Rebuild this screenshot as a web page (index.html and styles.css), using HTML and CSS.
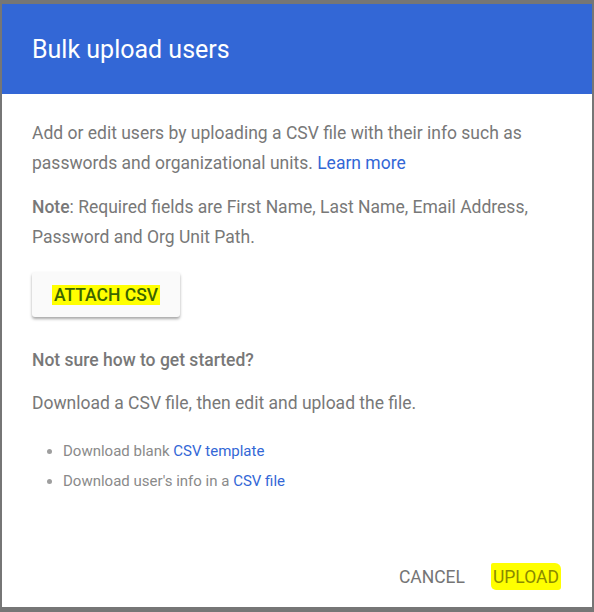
FILE: index.html
```html
<!DOCTYPE html>
<html lang="en">
<head>
  <meta charset="UTF-8">
  <title>Bulk upload users</title>
  <link rel="stylesheet" href="styles.css">
</head>
<body>

<div class="dialog">
  <header class="dialog-header">
    <h1>Bulk upload users</h1>
  </header>

  <div class="dialog-body">
    <p>Add or edit users by uploading a CSV file with their info such as passwords and organizational units. <a href="#">Learn more</a></p>
    <p class="note"><b>Note</b>: Required fields are First Name, Last Name, Email Address, Password and Org Unit Path.</p>

    <button class="attach-btn"><span class="mark">ATTACH CSV</span></button>

    <p class="subtitle">Not sure how to get started?</p>
    <p class="hint">Download a CSV file, then edit and upload the file.</p>

    <ul class="downloads">
      <li>Download blank <a href="#">CSV template</a></li>
      <li>Download user's info in a <a href="#">CSV file</a></li>
    </ul>
  </div>

  <footer class="dialog-footer">
    <button class="flat-btn">CANCEL</button>
    <button class="flat-btn upload"><span class="mark rough">UPLOAD</span></button>
  </footer>
</div>

</body>
</html>
```

FILE: styles.css
```css
body {
  margin: 0;
  background: #767676;
  font-family: Roboto, "Liberation Sans", sans-serif;
}

.dialog {
  margin: 4px 2px 5px;
  height: 603px;
  background: white;
  display: flex;
  flex-direction: column;
}

.dialog-header {
  background: #3367d6;
  height: 90px;
  padding-left: 30px;
}

.dialog-header h1 {
  margin: 0;
  font-size: 25px;
  font-weight: 400;
  line-height: 91px;
  color: white;
}

.dialog-body {
  padding: 24px 30px 0;
  color: #787878;
  font-size: 17.5px;
}

.dialog-body p {
  margin: 0;
  line-height: 30px;
}

.dialog-body a {
  color: #3367d6;
  text-decoration: none;
}

.note {
  margin-top: 14px !important;
}

.note b {
  font-weight: 500;
}

.attach-btn {
  margin-top: 20px;
  width: 148px;
  height: 45px;
  border: none;
  border-radius: 3px;
  background: #fafafa;
  box-shadow: 0 2px 3px rgba(0, 0, 0, 0.35);
  font-family: inherit;
  font-size: 17.5px;
  font-weight: 500;
  color: #3b6400;
  padding: 0;
  cursor: pointer;
}

.mark {
  background: #ffff00;
  padding: 0 2px;
}

.subtitle {
  margin-top: 28px !important;
  font-weight: 500;
}

.hint {
  margin-top: 13px !important;
}

.downloads {
  margin: 18px 0 0;
  padding-left: 31px;
  font-size: 15px;
  line-height: 30px;
  color: #8a8a8a;
}

.downloads li::marker {
  color: #9e9e9e;
}

.dialog-footer {
  margin-top: auto;
  display: flex;
  justify-content: flex-end;
  gap: 10px;
  padding: 0 23px 12px 0;
}

.flat-btn {
  border: none;
  background: none;
  font-family: inherit;
  font-size: 17.5px;
  color: #757575;
  padding: 8px 8px;
  cursor: pointer;
}

.upload {
  color: #8a8a00;
}

.rough {
  padding: 4px 2px 3px;
  border-radius: 2px 6px 3px 5px;
}
```
